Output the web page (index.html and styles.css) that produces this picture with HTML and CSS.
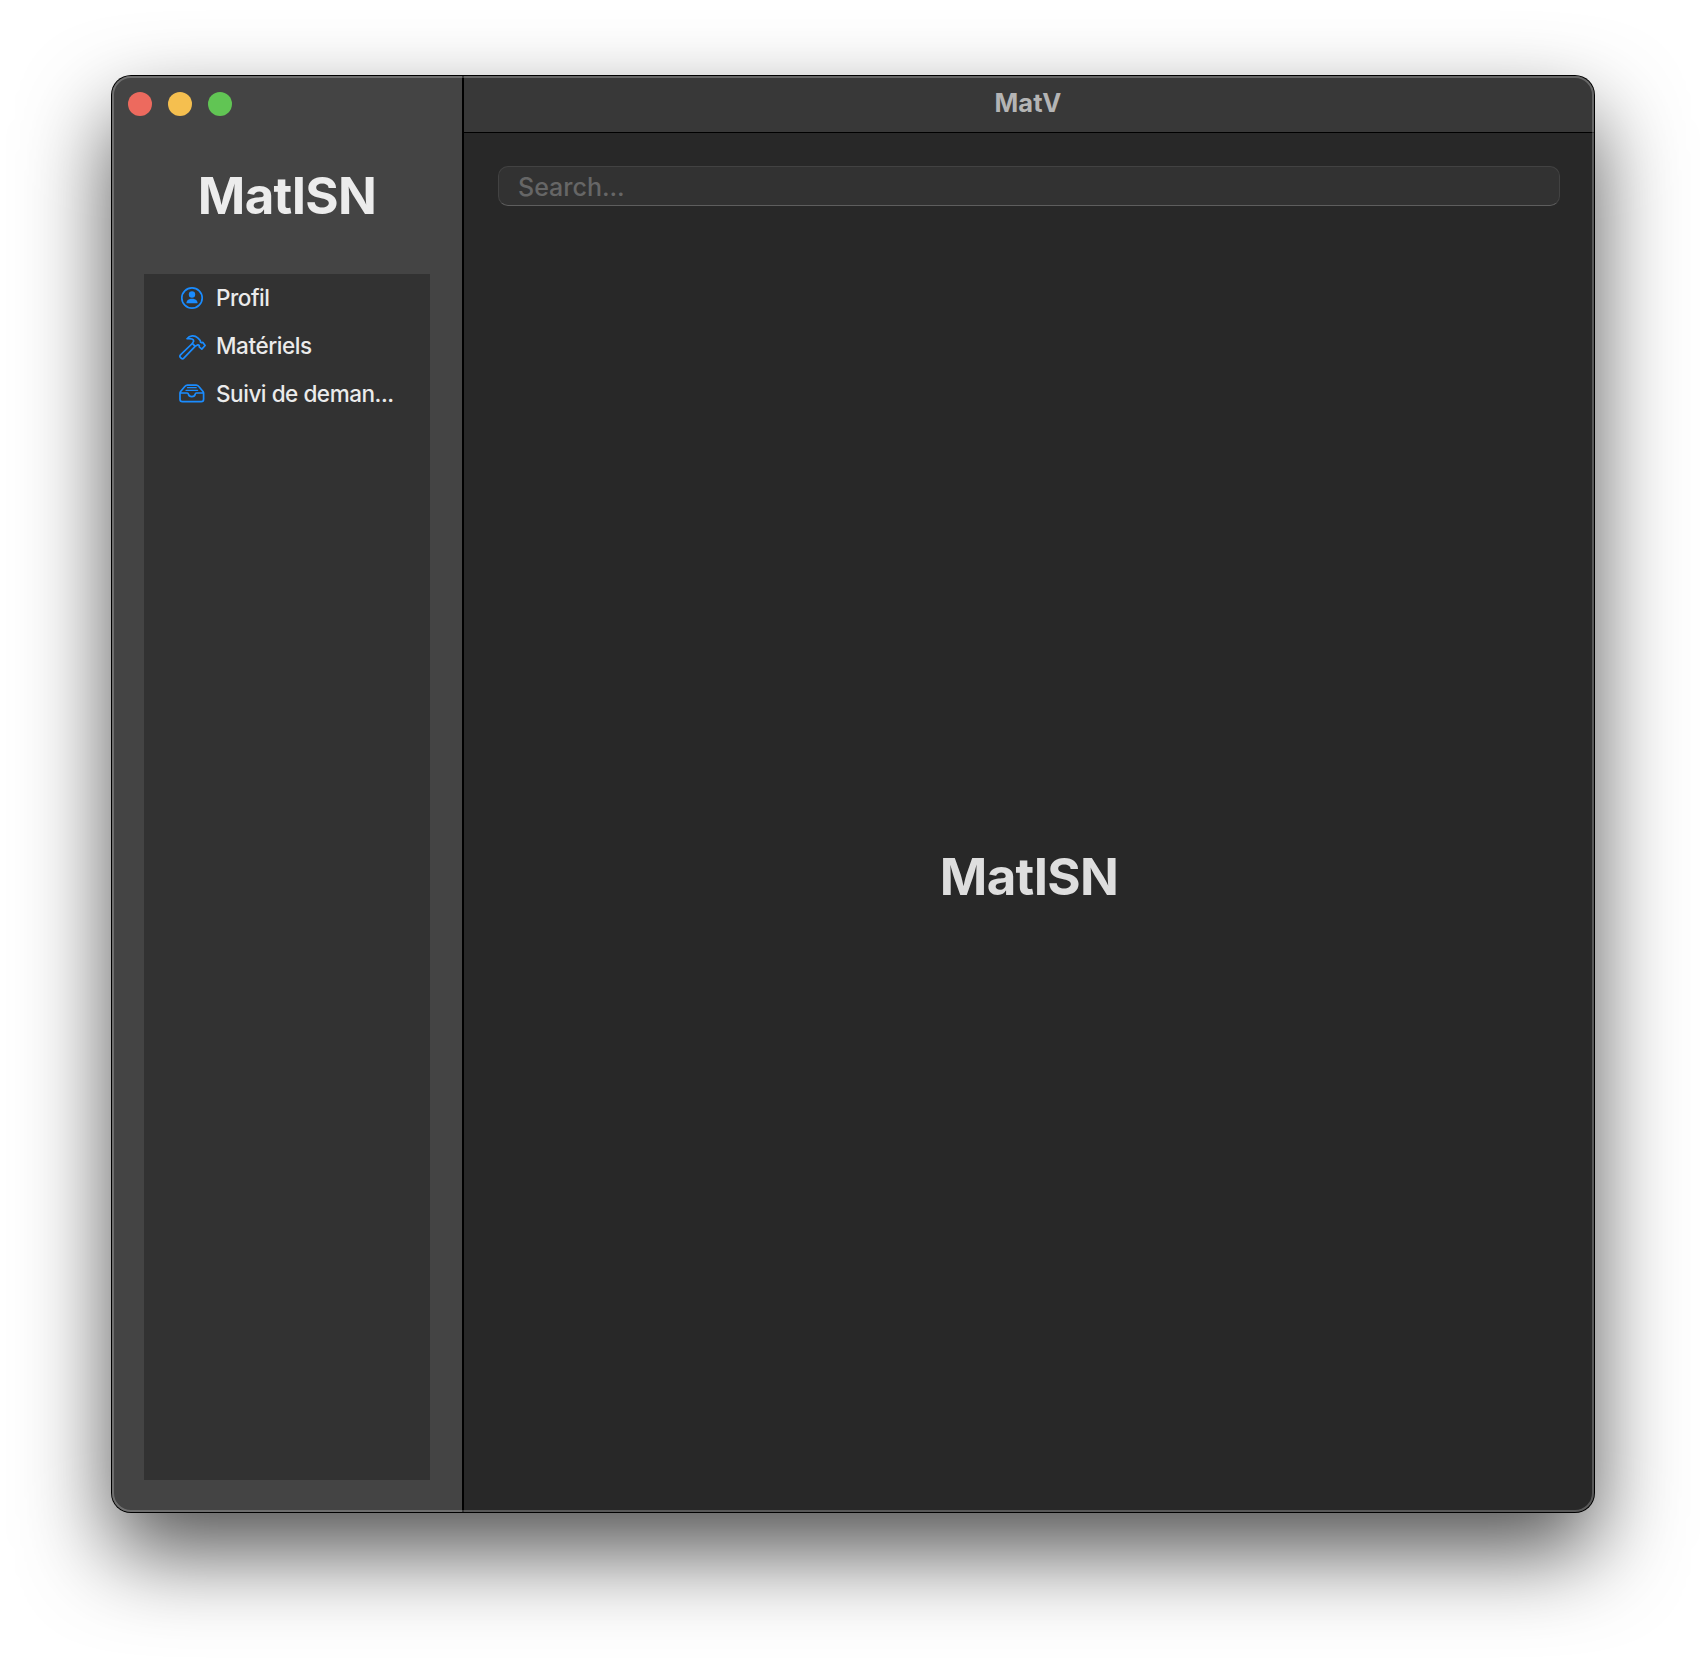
FILE: index.html
```html
<!DOCTYPE html>
<html lang="fr">
<head>
<meta charset="utf-8">
<title>MatV</title>
<link rel="stylesheet" href="styles.css">
</head>
<body>
<div class="window">
  <aside class="sidebar">
    <div class="controls"><span class="dot close"></span><span class="dot minimize"></span><span class="dot expand"></span></div>
    <h1 class="brand">MatISN</h1>
    <nav class="menu">
      <a class="item">
        <svg class="icon" viewBox="0 0 28 28"><circle cx="14" cy="14" r="10.2"/><circle class="solid" cx="14" cy="10.500" r="3.200"/><path class="solid" d="M8.400 19.200c0-2.900 2.600-4.400 5.600-4.400s5.600 1.500 5.600 4.400z"/></svg>
        <span class="label">Profil</span>
      </a>
      <a class="item">
        <svg class="icon" viewBox="0 0 28 28"><path d="M14.300 11.500L2.500 22.900q-1.200 1.300-.1 2.500l1 1q1.200 1 2.400-.2L17.100 14.300M9 6.700c2.600-3.400 7.600-3.800 10.700-.9l2 2c.7.700 1 1.500.8 2.500l1.300.5 1.100-.4 2.200 3.100-3.300 3.600-2.600-2.300.1-1.300-1.300-.7-2.800 1.500-2.900-2.900 1.300-2c.5-2-2.600-3.300-6.600-2.700z"/></svg>
        <span class="label">Matériels</span>
      </a>
      <a class="item">
        <svg class="icon" viewBox="0 0 28 28"><path d="M2 13.300v5.900q0 2.400 2.400 2.400h18.800q2.400 0 2.400-2.400v-5.900q0-1-.6-1.800l-4.400-5.200Q19.700 5.100 18.100 5.100H9.500Q7.900 5.100 7 6.300l-4.400 5.200Q2 12.300 2 13.300zM2.200 13h7q1 0 1.200 1.200c.3 1.600 1.500 2.500 3.400 2.500s3.100-.9 3.400-2.500q.2-1.200 1.200-1.200h7"/><path class="thin" d="M9.500 7.700h8.700M8 10.300h11.600"/></svg>
        <span class="label">Suivi de deman...</span>
      </a>
    </nav>
  </aside>
  <main class="main">
    <header class="toolbar">MatV</header>
    <div class="search"><input class="field" type="text" placeholder="Search..."></div>
    <section class="content"><h2 class="hero">MatISN</h2></section>
  </main>
</div>
</body>
</html>
```
FILE: styles.css
```css
* { box-sizing: border-box; }
body {
  margin: 0;
  padding: 76px 112px 148px;
  background: #fff;
  font-family: Inter, "Liberation Sans", sans-serif;
}
.window {
  position: relative;
  display: flex;
  width: 1482px;
  height: 1436px;
  border-radius: 19px;
  background: #282828;
  box-shadow: 0 0 0 1px #000, 0 40px 88px rgba(0,0,0,.68);
}
.window::after {
  content: "";
  position: absolute;
  inset: 0;
  border: 2px solid rgba(255,255,255,.23);
  border-radius: 19px;
  pointer-events: none;
}
.sidebar {
  display: flex;
  flex-direction: column;
  width: 352px;
  padding: 16px 32px 32px;
  border-right: 2px solid #000;
  border-radius: 19px 0 0 19px;
  background: #444;
}
.controls { display: flex; gap: 16px; margin-left: -16px; }
.dot { width: 24px; height: 24px; border-radius: 50%; }
.close { background: #ed6a5e; }
.minimize { background: #f5bf4f; }
.expand { background: #61c554; }
.brand, .hero { margin: 0; font-size: 51px; line-height: 62px; font-weight: 700; letter-spacing: -.7px; text-align: center; }
.brand { margin-top: 49px; color: #ececec; }
.menu { flex: 1; margin-top: 47px; padding-left: 34px; background: #323232; }
.item { display: flex; align-items: center; gap: 10px; height: 48px; color: #ebebeb; font-size: 22.500px; font-weight: 500; letter-spacing: -.45px; }
.icon { flex: none; width: 28px; height: 28px; fill: none; stroke: #1a8cff; stroke-width: 1.700; stroke-linejoin: round; stroke-linecap: round; }
.icon .solid { fill: #1a8cff; stroke: none; }
.icon .thin { stroke-width: 1.300; }
.label { padding-bottom: 2px; white-space: nowrap; }
.main { display: flex; flex: 1; flex-direction: column; }
.toolbar {
  height: 57px;
  border-bottom: 1px solid #000;
  border-radius: 0 19px 0 0;
  background: #383838;
  color: #b4b4b4;
  font-size: 25.500px;
  font-weight: 700;
  line-height: 54px;
  padding-right: 2px;
  text-align: center;
}
.search { padding: 33px 34px 0; }
.field {
  display: block;
  width: 100%;
  height: 40px;
  padding: 2px 19px 0;
  border: 1px solid #424242;
  border-bottom-color: #5e5e5e;
  border-radius: 10px;
  background: #323232;
  color: #ddd;
  font: 500 25px Inter, "Liberation Sans", sans-serif;
}
.field::placeholder { color: #666; opacity: 1; }
.content { display: flex; flex: 1; align-items: center; justify-content: center; padding-top: 35px; }
.hero { color: #dedede; }
```
